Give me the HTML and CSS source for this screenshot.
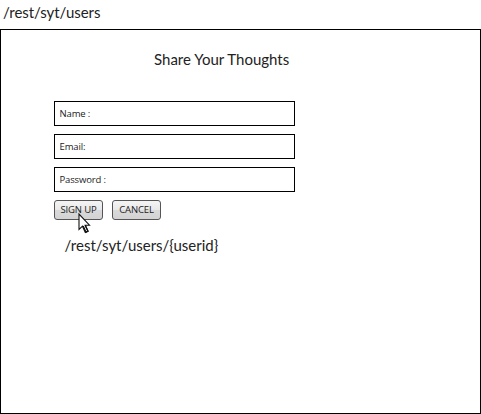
FILE: index.html
```html
<!DOCTYPE html>
<html lang="en">
<head>
<meta charset="utf-8">
<title>Share Your Thoughts</title>
<link rel="stylesheet" href="styles.css">
</head>
<body>
<header class="route">/rest/syt/users</header>
<main class="frame">
  <h1 class="title">Share Your Thoughts</h1>
  <form class="form">
    <div class="field"><span class="label">Name :</span></div>
    <div class="field"><span class="label">Email:</span></div>
    <div class="field"><span class="label">Password :</span></div>
    <div class="actions">
      <button type="button" class="button">SIGN UP
        <svg class="cursor" width="13" height="21" viewBox="0 0 13 21"><path d="M1 1V16.5L4.5 13.2L7.3 19.5L10 18.2L7.2 12.2H11.5Z" fill="#fff" stroke="#111" stroke-width="1.1"/><path d="M5.2 13L8 19.2L10 18.2L7.2 12.2" fill="none" stroke="#111" stroke-width="1.3"/></svg>
      </button>
      <button type="button" class="button">CANCEL</button>
    </div>
  </form>
  <p class="user-route">/rest/syt/users/{userid}</p>
</main>
</body>
</html>
```
FILE: styles.css
```css
* { box-sizing: border-box; }
body {
  margin: 0;
  height: 414px;
  display: flex;
  flex-direction: column;
  background: #fff;
  color: #222;
  font-family: Lato, "Open Sans", sans-serif;
  overflow: hidden;
}
.route {
  height: 29px;
  padding: 2px 0 0 3px;
  font-size: 15px;
  line-height: 20px;
  letter-spacing: -0.05px;
}
.frame {
  flex: 1;
  border: 1px solid #000;
}
.title {
  margin: 19px 0 0 153px;
  font-size: 15px;
  font-weight: 400;
  line-height: 20px;
  white-space: nowrap;
}
.form {
  width: 241px;
  margin: 32px 0 0 53px;
  display: flex;
  flex-direction: column;
  gap: 8px;
}
.field {
  height: 25px;
  padding-left: 4.5px;
  border: 1px solid #000;
  display: flex;
  align-items: center;
}
.label {
  font-family: "Open Sans", sans-serif;
  font-size: 9.5px;
  line-height: 14px;
  letter-spacing: -0.15px;
}
.actions {
  display: flex;
  gap: 9px;
}
.button {
  position: relative;
  width: 49px;
  height: 20px;
  padding: 0;
  border: 1px solid #555;
  border-radius: 3px;
  background: linear-gradient(#f4f4f4, #e9e9e9 48%, #d9d9d9 52%, #d3d3d3);
  color: #222;
  font-family: "Open Sans", sans-serif;
  font-size: 9.5px;
  line-height: 16px;
  letter-spacing: -0.15px;
  white-space: nowrap;
}
.cursor {
  position: absolute;
  left: 23px;
  top: 12px;
}
.user-route {
  margin: 15px 0 0 63.5px;
  font-size: 15px;
  line-height: 20px;
}
```
